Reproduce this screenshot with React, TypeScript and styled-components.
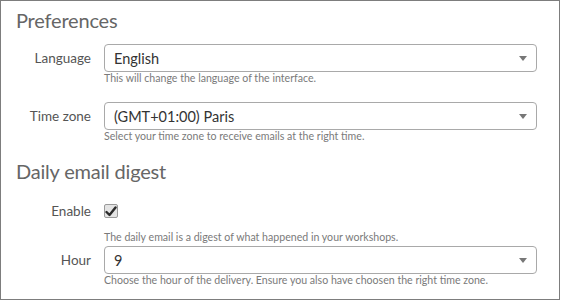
import styled, { createGlobalStyle } from "styled-components";

const GlobalStyle = createGlobalStyle`
  html, body {
    margin: 0;
    padding: 0;
    background: #ffffff;
  }
  body {
    font-family: Lato, "Open Sans", "Liberation Sans", sans-serif;
  }
`;

const Panel = styled.div`
  box-sizing: border-box;
  width: 560px;
  height: 300px;
  border: 1px solid #7d7d7d;
  padding: 7px 22px 0 15px;
  background: #fff;
`;

const SectionTitle = styled.h2<{ mt?: number }>`
  margin: ${(p) => (p.mt ? p.mt : 0)}px 0 0 0;
  font-size: 20px;
  line-height: 24px;
  font-weight: 400;
  letter-spacing: -0.2px;
  color: #666;
`;

const Row = styled.div<{ mt?: number }>`
  display: grid;
  grid-template-columns: 75px 1fr;
  column-gap: 13px;
  margin-top: ${(p) => (p.mt ? p.mt : 0)}px;
`;

const Label = styled.label`
  height: 28px;
  display: flex;
  align-items: center;
  justify-content: flex-end;
  font-size: 13.5px;
  color: #555;
`;

const Control = styled.div`
  display: flex;
  flex-direction: column;
`;

const SelectBox = styled.div`
  box-sizing: border-box;
  position: relative;
  height: 28px;
  border: 1px solid #a9a9a9;
  border-radius: 4px;
  display: flex;
  align-items: center;
  padding-left: 9px;
  font-size: 14.5px;
  color: #333;
  background: #fff;
`;

const Arrow = styled.span`
  position: absolute;
  right: 9px;
  top: 50%;
  margin-top: -2px;
  width: 0;
  height: 0;
  border-left: 4px solid transparent;
  border-right: 4px solid transparent;
  border-top: 5px solid #777;
`;

const Help = styled.div<{ mt?: number }>`
  margin-top: ${(p) => (p.mt ? p.mt : 0)}px;
  font-size: 10.6px;
  line-height: 13px;
  color: #7a7a7a;
`;

const CheckWrap = styled.div`
  height: 28px;
  display: flex;
  align-items: center;
`;

const CheckBox = styled.span`
  box-sizing: border-box;
  width: 14px;
  height: 14px;
  border: 1px solid #9a9a9a;
  border-radius: 2px;
  background: #e4e4e4;
  display: flex;
  align-items: center;
  justify-content: center;
`;

const Select = ({ value }: { value: string }) => (
  <SelectBox>
    {value}
    <Arrow />
  </SelectBox>
);

export default function App() {
  return (
    <>
      <GlobalStyle />
      <Panel>
        <SectionTitle>Preferences</SectionTitle>
        <Row mt={12}>
          <Label>Language</Label>
          <Control>
            <Select value="English" />
            <Help>This will change the language of the interface.</Help>
          </Control>
        </Row>
        <Row mt={17}>
          <Label>Time zone</Label>
          <Control>
            <Select value="(GMT+01:00) Paris" />
            <Help>Select your time zone to receive emails at the right time.</Help>
          </Control>
        </Row>
        <SectionTitle mt={16}>Daily email digest</SectionTitle>
        <Row mt={14}>
          <Label>Enable</Label>
          <Control>
            <CheckWrap>
              <CheckBox>
                <svg width="12" height="11" viewBox="0 0 12 11">
                  <path
                    d="M1.5 6 L4.5 9 L10.5 1.5"
                    fill="none"
                    stroke="#2b2b2b"
                    strokeWidth="2.4"
                    strokeLinecap="round"
                    strokeLinejoin="round"
                  />
                </svg>
              </CheckBox>
            </CheckWrap>
            <Help mt={6}>
              The daily email is a digest of what happened in your workshops.
            </Help>
          </Control>
        </Row>
        <Row mt={2}>
          <Label>Hour</Label>
          <Control>
            <Select value="9" />
            <Help>
              Choose the hour of the delivery. Ensure you also have choosen the
              right time zone.
            </Help>
          </Control>
        </Row>
      </Panel>
    </>
  );
}
